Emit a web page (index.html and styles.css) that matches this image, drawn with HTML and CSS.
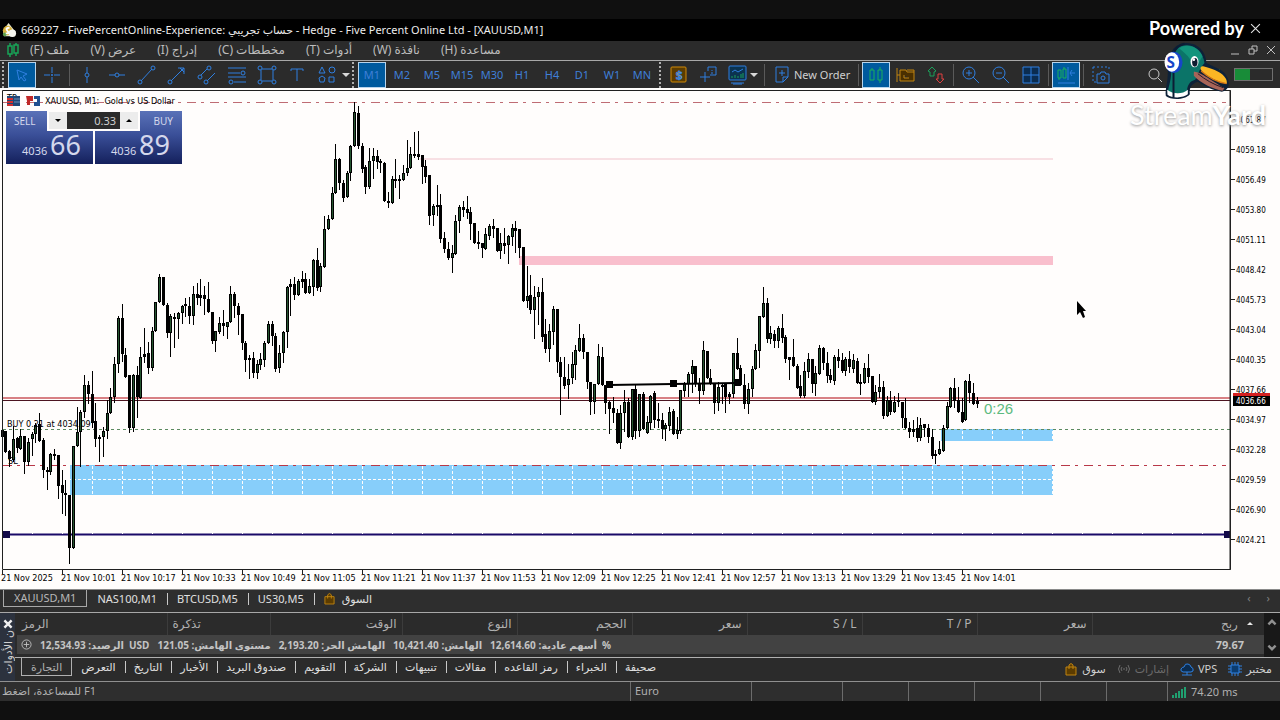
FILE: index.html
```html
<!DOCTYPE html>
<html lang="ar">
    <head>
        <meta charset="utf-8">
        <meta name="viewport" content="width=device-width, initial-scale=1">
        <title>XAUUSD,M1</title>

        <link rel="stylesheet" href="styles.css">
    </head>
    <body>
        <div class="titlebar">
            <svg class="applogo" viewBox="0 0 16 16"><path d="M7 0L14 9V14H2L1 8Z" fill="#e8e8d0"/><circle cx="6" cy="8" r="5" fill="#d8b23c"/><circle cx="11" cy="11" r="4" fill="#f4f4ee"/><circle cx="3" cy="12" r="2" fill="#5fa04c"/><path d="M8 5Q4 5 5 7T7 10T4 11" fill="none" stroke="#fff" stroke-width="2"/></svg>
            <span>669227 - FivePercentOnline-Experience: حساب تجريبي - Hedge - Five Percent Online Ltd - [XAUUSD,M1]</span>
        </div>

        <div class="menubar">
            <svg class="menulogo" viewBox="0 0 14 14"><path d="M4 0V3M4 11V14M10 0V2M10 10V13M2 3H6V11H2ZM8 2H12V10H8Z" fill="none" stroke="#18a558" stroke-width="1.5"/></svg>
            <button dir="rtl">ملف (F)</button>
            <button dir="rtl">عرض (V)</button>
            <button dir="rtl">إدراج (I)</button>
            <button dir="rtl">مخططات (C)</button>
            <button dir="rtl">أدوات (T)</button>
            <button dir="rtl">نافذة (W)</button>
            <button dir="rtl">مساعدة (H)</button>
            <div class="winbtns">
                <button aria-label="Minimize"><svg viewBox="0 0 10 10"><path d="M1 9H9"/></svg></button>
                <button aria-label="Restore"><svg viewBox="0 0 10 10"><path d="M1 4H6V9H1ZM4 4V1H9V6H6"/></svg></button>
                <button aria-label="Close"><svg viewBox="0 0 10 10"><path d="M1 1L9 9M9 1L1 9"/></svg></button>
            </div>
        </div>

        <div class="toolbar">
            <i class="grip"></i>
            <button class="tool active" aria-label="Cursor"><svg viewBox="0 0 20 20"><path d="M5 5L15 9L11 11L14 15L12 16L9 12L7 15Z"/></svg></button>
            <button class="tool" aria-label="Crosshair"><svg viewBox="0 0 20 20"><path d="M10 2V8M10 12V18M2 10H8M12 10H18M10 9V11M9 10H11"/></svg></button>
            <i class="sep"></i>
            <button class="tool" aria-label="Vertical line"><svg viewBox="0 0 20 20"><path d="M10 2V8M10 12V18"/><circle cx="10" cy="10" r="2"/></svg></button>
            <button class="tool" aria-label="Horizontal line"><svg viewBox="0 0 20 20"><path d="M2 10H8M12 10H18"/><circle cx="10" cy="10" r="2"/></svg></button>
            <button class="tool" aria-label="Trendline"><svg viewBox="0 0 20 20"><path d="M4 16L15 4"/><circle cx="3" cy="17" r="2"/><circle cx="16" cy="3" r="2"/></svg></button>
            <button class="tool" aria-label="Arrow"><svg viewBox="0 0 20 20"><path d="M4 16L17 3M11 3H17V9M13 3L17 7"/><circle cx="3" cy="17" r="2"/></svg></button>
            <button class="tool" aria-label="Channel"><svg viewBox="0 0 20 20"><path d="M4 10L10 4M10 16L18 8"/><circle cx="3" cy="12" r="2"/><circle cx="12" cy="3" r="2"/><circle cx="9" cy="17" r="2"/></svg></button>
            <button class="tool" aria-label="Fibonacci"><svg viewBox="0 0 20 20"><path d="M1 3H19M1 8H13M1 12H19M7 17H19"/><circle cx="16" cy="8" r="2"/><circle cx="4" cy="17" r="2"/></svg></button>
            <button class="tool" aria-label="Rectangle"><svg viewBox="0 0 20 20"><path d="M5 4H15M5 16H15M4 5V15M16 5V15"/><circle cx="3" cy="3" r="2"/><circle cx="17" cy="3" r="2"/><circle cx="3" cy="17" r="2"/><circle cx="17" cy="17" r="2"/></svg></button>
            <button class="tool" aria-label="Text"><svg viewBox="0 0 20 20"><path d="M4 6V4H16V6M10 4V16"/></svg></button>
            <button class="tool" aria-label="Objects"><svg viewBox="0 0 20 20"><path d="M5 2L8 8H2ZM5 11L8 13L7 17H3L2 13ZM12 12H17V17H12Z"/><circle cx="15" cy="5" r="3"/></svg></button>
            <i class="caret"></i>
            <i class="grip"></i>
            <button class="tool active">M1</button>
            <button class="tool">M2</button>
            <button class="tool">M5</button>
            <button class="tool">M15</button>
            <button class="tool">M30</button>
            <button class="tool">H1</button>
            <button class="tool">H4</button>
            <button class="tool">D1</button>
            <button class="tool">W1</button>
            <button class="tool">MN</button>
            <i class="grip"></i>
            <button class="tool" aria-label="Trading"><svg viewBox="0 0 20 20"><rect x="2" y="2" width="15" height="15" rx="1" fill="#5c3c00" stroke="#d08a08"/><text x="7" y="14" class="dollar">$</text></svg></button>
            <button class="tool" aria-label="Data window"><svg viewBox="0 0 20 20"><path d="M6 7V17M1 12H11M9 2H17V10H11M9 2V6M13 5V6M13 7V9"/></svg></button>
            <button class="tool narrow" aria-label="Indicators"><svg viewBox="0 0 20 20"><rect x="2" y="1" width="17" height="14" rx="1" fill="#0b3350"/><path d="M4 18H17M6 19H15M5 7L8 5L11 7L16 4"/><path d="M5 13V11M8 13V10M11 13V11M14 13V9M16 13V8" stroke="#1aa05a"/></svg></button>
            <i class="caret"></i>
            <i class="sep"></i>
            <button class="neworder"><svg viewBox="0 0 20 20"><path d="M4 2H16V12L11 17H4ZM16 12H11V17M7 8H13M10 5V11"/></svg>New Order</button>
            <i class="sep"></i>
            <button class="tool active" aria-label="Candlesticks"><svg viewBox="0 0 20 20"><path d="M4 5H8V15H4ZM12 5H16V15H12ZM6 3V5M14 2V5M14 15V18" stroke="#18b05c"/></svg></button>
            <button class="tool" aria-label="Templates"><svg viewBox="0 0 20 20"><path d="M4 5H10L11 7H18V16H4ZM1 3V17M1 10H4M11 5H18V7M8 10V13H13" fill="#4b3000" stroke="#c08410"/></svg></button>
            <button class="tool" aria-label="Depth of market"><svg viewBox="0 0 20 20"><path d="M6 2L10 6L8 7V11H4V7L2 6Z" stroke="#1aa05a"/><path d="M14 18L18 14H16V9H12V14H10Z" stroke="#e04040"/></svg></button>
            <i class="sep"></i>
            <button class="tool" aria-label="Zoom in"><svg viewBox="0 0 20 20"><circle cx="8" cy="8" r="6"/><path d="M12 12L18 18M5 8H11M8 5V11"/></svg></button>
            <button class="tool" aria-label="Zoom out"><svg viewBox="0 0 20 20"><circle cx="8" cy="8" r="6"/><path d="M12 12L18 18M5 8H11"/></svg></button>
            <button class="tool" aria-label="Tile windows"><svg viewBox="0 0 20 20"><path d="M2 2H18V18H2ZM10 2V18M2 10H18" fill="#0b2c50"/></svg></button>
            <i class="sep"></i>
            <button class="tool active" aria-label="Chart shift"><svg viewBox="0 0 20 20"><path d="M2 5H5V13H2ZM7 4H10V13H7ZM8 2V4M3 13V15" stroke="#18b05c"/><path d="M12 2V15M2 18H19M19 8H14M16 5L14 8L16 11"/></svg></button>
            <i class="sep"></i>
            <button class="tool" aria-label="Screenshot"><svg viewBox="0 0 20 20"><path d="M2 2H18V5M2 2V17H5" stroke-dasharray="2 2"/><path d="M6 9H9L10 7H14L15 9H18V18H6Z"/><circle cx="12" cy="13" r="2"/></svg></button>
            <button class="tool search" aria-label="Search"><svg viewBox="0 0 20 20"><circle cx="9" cy="9" r="5"/><path d="M13 13L17 17"/></svg></button>
            <button class="tool up" aria-label="Notifications"><svg viewBox="0 0 20 20"><path d="M10 4L14 8L12 9V13H8V9L6 8Z"/></svg></button>
            <span class="level"><b></b></span>
        </div>

        <div class="chart">
            <svg id="chart" class="plot" viewBox="0 88 1280 501">
                <rect class="blue" x="70" y="465" width="983" height="30"/>
                <rect class="blue" x="941" y="429" width="112" height="12"/>
                <path class="level-navy" d="M3 534.5H1230"/>
                <g id="grid"></g>
                <rect class="pink faint" x="420" y="158" width="633" height="2"/>
                <rect class="pink" x="519" y="256" width="534" height="9"/>
                <path class="stop faded" d="M3 102.5H1226"/>
                <path class="stop" d="M3 465.5H1226"/>
                <path class="entry" d="M3 429.5H1230"/>
                <path class="ask" d="M3 398H1230"/>
                <path class="bid" d="M3 400.5H1230"/>
                <g id="candles"></g>
                <path class="trend" d="M609 385L673 384L737 383"/>
                <path class="handles" d="M606 381h7v7h-7ZM670 380h7v7h-7ZM734 379h7v7h-7Z"/>
                <path class="handles navy" d="M3 531h7v7h-7ZM1224 531h7v7h-7Z"/>
                <text class="small" x="7" y="427">BUY 0.21 at 4034.09</text>
                <text class="small" x="8" y="464">SL</text>
                <text class="small" x="7" y="101">TP</text>
                <text class="timer" x="984" y="414">0:26</text>
                <path class="frame" d="M2.5 569.5V90.5H1230.5V569.5ZM1230 90V570"/>
                <g id="axes"></g>
                <rect x="1233" y="393" width="37" height="5" fill="#d42020"/>
                <rect x="1233" y="396" width="37" height="10"/>
                <text class="price now" x="1236" y="404">4036.66</text>
                <g>
                    <rect x="7" y="96" width="13" height="10" fill="#204878"/>
                    <path d="M7 99H13M7 102H13M7 105H13" stroke="#d03030" stroke-width="2"/>
                    <path d="M14 99H20M14 102H20" stroke="#7090b8"/>
                    <path d="M26 96H33V101H30V105H27V101Z" fill="#c02828"/>
                    <path d="M34 96H40V106H34V102H37V99H34Z" fill="#205090"/>
                </g>
                <text class="small" x="45" y="104">XAUUSD, M1:&#160; Gold vs US Dollar</text>
                <path d="M1077 301V315L1080 312L1083 318L1085 317L1083 311H1086Z"/>
            </svg>

            <div class="oneclick">
                <button class="deal"><span class="side">SELL</span><span class="quote">4036 <b>66</b></span></button>
                <button class="deal buy"><span class="side">BUY</span><span class="quote">4036 <b>89</b></span></button>
                <div class="volume">
                    <button aria-label="Less"><i class="down"></i></button>
                    <input type="text" value="0.33" aria-label="Volume">
                    <button aria-label="More"><i class="upward"></i></button>
                </div>
            </div>
        </div>

        <div class="charttabs">
            <button class="current">XAUUSD,M1</button>
            <button>NAS100,M1</button>
            <button>BTCUSD,M5</button>
            <button>US30,M5</button>
            <button class="market"><svg viewBox="0 0 12 14"><path d="M1 5H11V13H1ZM4 7V3Q6 0 8 3V7" fill="#5c3c00" stroke="#c08410"/></svg>السوق</button>
            <span class="arrows">‹</span>
            <span class="arrows">›</span>
        </div>

        <div class="toolbox">
            <div class="side-title">
                <button aria-label="Close toolbox"><svg viewBox="0 0 10 10"><path d="M2 2L8 8M8 2L2 8"/></svg></button>
                <span>ن الأدوات</span>
            </div>
            <div class="panel">
                <div class="trades">
                    <table>
                        <colgroup>
                            <col class="c-symbol"><col class="c-ticket"><col class="c-time"><col class="c-num"><col class="c-num"><col class="c-num"><col class="c-num"><col class="c-num"><col class="c-num"><col>
                        </colgroup>
                        <tr>
                            <th class="start">الرمز</th>
                            <th class="start">تذكرة</th>
                            <th>الوقت</th>
                            <th>النوع</th>
                            <th>الحجم</th>
                            <th>سعر</th>
                            <th>S / L</th>
                            <th>T / P</th>
                            <th>سعر</th>
                            <th class="profit">ربح <i class="upward"></i></th>
                        </tr>
                        <tr class="balance">
                            <td colspan="9">
                                <div class="sums">
                                    <svg viewBox="0 0 12 12"><circle cx="6" cy="6" r="5"/><path d="M3 6H9M6 3V9"/></svg>
                                    <span dir="rtl">الرصيد: 12,534.93</span>
                                    <span class="unit">USD</span>
                                    <span dir="rtl">مستوى الهامش: 121.05</span>
                                    <span dir="rtl">الهامش الحر: 2,193.20</span>
                                    <span dir="rtl">الهامش: 10,421.40</span>
                                    <span dir="rtl">أسهم عادية: 12,614.60</span>
                                    <span class="percent">%</span>
                                </div>
                            </td>
                            <td class="total">79.67</td>
                        </tr>
                    </table>
                    <div class="scroll">
                        <svg viewBox="0 0 10 10"><path d="M2 7L5 4L8 7"/></svg>
                        <svg viewBox="0 0 10 10"><path d="M2 3L5 6L8 3"/></svg>
                    </div>
                </div>
                <div class="tabs">
                    <button class="current">التجارة</button>
                    <button>التعرض</button>
                    <button>التاريخ</button>
                    <button>الأخبار</button>
                    <button>صندوق البريد</button>
                    <button>التقويم</button>
                    <button>الشركة</button>
                    <button>تنبيهات</button>
                    <button>مقالات</button>
                    <button>رمز القاعده</button>
                    <button>الخبراء</button>
                    <button>صحيفة</button>
                    <div class="services">
                        <a href="#market"><svg viewBox="0 0 14 14"><path d="M2 5H12V13H2ZM5 7V3Q7 0 9 3V7" fill="#5c3c00" stroke="#c08410"/></svg>سوق</a>
                        <a href="#signals" class="off"><svg viewBox="0 0 14 14"><path d="M3 3Q0 7 3 11M11 3Q14 7 11 11M5 5Q3 7 5 9M9 5Q11 7 9 9M7 6V8"/></svg>إشارات</a>
                        <a href="#vps"><svg viewBox="0 0 14 14"><path d="M3 10Q0 9 1 7Q2 5 4 5Q5 1 8 2Q11 3 11 5Q14 6 13 9L11 10ZM7 10V13M2 13H12" fill="#0b2c50" stroke="#2f80e0"/></svg>VPS</a>
                        <a href="#tester"><svg viewBox="0 0 14 14"><path d="M3 3H11V11H3Z" fill="#0b3c70" stroke="#2f80e0"/><path d="M4 0V3M7 0V3M10 0V3M4 11V14M7 11V14M10 11V14M0 4H3M0 7H3M0 10H3M11 4H14M11 7H14M11 10H14" stroke="#2f80e0"/></svg>مختبر</a>
                    </div>
                </div>
            </div>
        </div>

        <div class="status">
            <span class="help" dir="rtl">F1 للمساعدة، اضغط</span>
            <span class="profile">Euro</span>
            <span class="cell"></span>
            <span class="cell"></span>
            <span class="cell"></span>
            <span class="cell"></span>
            <span class="cell"></span>
            <span class="cell"></span>
            <span class="ping"><svg viewBox="0 0 14 12"><path d="M1 12V9M4 12V7M7 12V5M10 12V3M13 12V1"/></svg>74.20 ms</span>
        </div>

        <div class="watermark">
            <span class="powered">Powered by</span>
            <svg class="close" viewBox="0 0 10 10"><path d="M1 1L9 9M9 1L1 9"/></svg>
            <svg class="duck" viewBox="0 0 200 180">
                <path d="M8 165C5 145 14 125 14 95C10 50 25 8 68 6C105 5 128 32 130 66L172 86C186 94 196 112 196 122C200 135 190 150 176 152C150 148 124 135 104 122C84 128 78 140 80 160C66 178 22 178 8 165Z" fill="#0e2138"/>
                <path d="M14 158C14 140 24 122 24 94C18 50 34 14 68 13C100 13 120 36 124 66C110 80 104 104 96 116C80 120 70 134 72 156Z" fill="#0b7468"/>
                <path d="M48 22C70 6 106 16 118 46L104 70L82 56C70 40 62 34 48 22Z" fill="#12947c"/>
                <path d="M12 146C30 160 58 160 74 146L74 160C60 172 26 172 13 161Z" fill="#fff"/>
                <path d="M92 92C108 92 124 104 184 142L178 149C150 144 112 126 92 104Z" fill="#a86458"/>
                <path d="M120 76C134 80 150 84 168 94C184 104 193 116 191 128C170 126 132 108 114 88C110 82 112 76 120 76Z" fill="#fbb624"/>
                <path d="M114 90C136 110 164 124 190 128" fill="none" stroke="#d87818" stroke-width="4"/>
                <path d="M104 98C126 116 150 130 180 140" fill="none" stroke="#2a1c28" stroke-width="3"/>
                <ellipse cx="94" cy="62" rx="12" ry="17" fill="#fff"/>
                <ellipse cx="95" cy="64" rx="8" ry="13" fill="#0e1c30"/>
                <circle cx="92" cy="56" r="4" fill="#fff"/>
                <path d="M31 90V170M30 42C34 24 50 10 64 8" fill="none" stroke="#0c1c34" stroke-width="6"/>
                <ellipse cx="32" cy="64" rx="26" ry="32" fill="#1746c8"/>
                <ellipse cx="26" cy="63" rx="22" ry="29" fill="#fff"/>
                <text x="10" y="80" class="duck-s">S</text>
            </svg>
            <span class="brand">Stream<b>Yard</b></span>
        </div>

        <script src="script.js"></script>
    </body>
</html>
```
FILE: styles.css
```css
* {
    box-sizing: border-box;
}

body {
    font-family: "Noto Sans", "Open Sans", "DejaVu Sans", sans-serif;
    font-size: 11px;
    line-height: 16px;
    margin: 0px;
    padding: 19px 0px;
    position: relative;
    color: #d0d0d0;
    background-color: #101010;
    overflow-x: hidden;
}

button,
input {
    font: inherit;
    color: inherit;
    background: none;
    border: 0px;
    border-radius: 0px;
    padding: 0px;
    margin: 0px;
}

svg {
    flex: none;
    fill: none;
    stroke: none;
}

.titlebar {
    display: flex;
    align-items: center;
    gap: 4px;
    height: 22px;
    padding-left: 2px;
    color: #ececec;
    background-color: #000;
    white-space: nowrap;
}

.applogo {
    width: 15px;
    height: 15px;
}

.menubar {
    display: flex;
    align-items: center;
    gap: 21px;
    height: 19px;
    padding: 0px 4px 2px 6px;
    background-color: #2b2b2b;
    white-space: nowrap;
    color: #bcbcbc;
}

.menubar > button {
    font-size: 12px;
}

.menulogo {
    width: 14px;
    height: 14px;
    margin-right: -11px;
}

.winbtns {
    display: flex;
    gap: 8px;
    margin-left: auto;
}

.winbtns svg {
    display: block;
    width: 10px;
    height: 10px;
    stroke: #c0c0c0;
}

/* toolbar */

.toolbar {
    display: flex;
    align-items: center;
    height: 28px;
    padding-right: 7px;
    border-top: 1px solid #a8a8a8;
    background-color: #2b2b2b;
}

.tool {
    flex: none;
    display: flex;
    align-items: center;
    justify-content: center;
    width: 30px;
    height: 26px;
    color: #3f7fd8;
}

.tool svg,
.neworder svg {
    width: 20px;
    height: 20px;
    stroke: #2f7fe0;
}

.tool.narrow {
    width: 26px;
}

.tool.active {
    background-color: #005a9e;
    border: 1px solid #b8d4ec;
    width: 28px;
    margin: 0px 1px;
}

.grip {
    flex: none;
    width: 2px;
    height: 26px;
    margin: 0px 3px 0px 2px;
    border-left: 2px dotted #b0b0b0;
}

.sep {
    flex: none;
    width: 1px;
    height: 22px;
    margin: 0px 2px;
    background-color: #5a5a5a;
}

.caret {
    flex: none;
    border: 4px solid transparent;
    border-top-color: #d8d8d8;
    border-bottom-width: 0px;
}

.caret + .sep {
    margin-left: 6px;
}

.dollar {
    font-size: 11px;
    font-weight: bold;
    fill: #e8a020;
}

.neworder {
    flex: none;
    display: flex;
    align-items: center;
    gap: 2px;
    padding: 0px 6px 0px 5px;
    white-space: nowrap;
}

.search {
    margin-left: auto;
}

.search svg {
    stroke: #c8c8c8;
}

.up {
    margin-left: 34px;
}

.up svg {
    stroke: #1aa05a;
}

.level {
    flex: none;
    width: 39px;
    height: 13px;
    border: 1px solid #707070;
}

.level b {
    display: block;
    width: 15px;
    height: 11px;
    background-color: #188c38;
}

/* chart */

.chart {
    position: relative;
    background-color: #fffdfc;
}

.plot {
    display: block;
    width: 100%;
    height: auto;
    fill: #000;
}

.pink {
    fill: #f9bfcd;
}

.pink.faint {
    fill: #f8e0e4;
}

.blue {
    fill: #87cefa;
}

.grid-line {
    stroke: #fffdfc;
    stroke-dasharray: 3 2;
}

.level-navy {
    stroke: #1a0a68;
    stroke-width: 2;
}

.stop {
    fill: none;
    stroke: #b83848;
    stroke-dasharray: 9 5 3 6;
}

.stop.faded {
    stroke: #bf6c74;
}

.entry {
    fill: none;
    stroke: #5c8a60;
    stroke-dasharray: 3 3;
}

.ask {
    fill: none;
    stroke: #d88084;
    stroke-width: 2;
}

.bid {
    fill: none;
    stroke: #4c1420;
}

.candle {
    fill: #000;
    shape-rendering: crispEdges;
}

.rise {
    fill: #24552f;
    shape-rendering: crispEdges;
}

.trend {
    fill: none;
    stroke: #000;
    stroke-width: 2;
}

.handles.navy {
    fill: #120a48;
}

.frame,
.tick {
    fill: none;
    stroke: #202020;
}

.small,
.price {
    font-family: "DejaVu Sans Condensed", "DejaVu Sans", sans-serif;
    font-size: 9px;
}

.price {
    font-size: 8px;
}

.now {
    fill: #fff;
}

.timer {
    font-family: "Liberation Sans", sans-serif;
    font-size: 15px;
    fill: #5cba80;
}

.oneclick {
    position: absolute;
    left: 6px;
    top: 23px;
    display: flex;
    gap: 2px;
}

.deal {
    display: flex;
    flex-direction: column;
    justify-content: space-between;
    width: 87px;
    height: 53px;
    padding: 0px 4px 0px 8px;
    color: #d4d8ec;
    background: linear-gradient(#5a72b8, #3a4f98 45%, #14205c);
    text-align: left;
}

.deal.buy .side {
    text-align: right;
}

.side {
    width: 100%;
    padding: 2px 5px 0px 0px;
    font-size: 10px;
}

.quote {
    width: 100%;
    padding-right: 8px;
    text-align: right;
    line-height: 26px;
    white-space: nowrap;
}

.quote b {
    font-size: 27px;
    font-weight: 400;
}

.volume {
    position: absolute;
    left: 41px;
    top: 0px;
    display: flex;
    width: 93px;
    height: 20px;
    padding: 1px 2px 2px;
    background-color: #fffdfc;
}

.volume button {
    width: 18px;
    display: flex;
    align-items: center;
    justify-content: center;
    background-color: #ececec;
    color: #000;
}

.volume input {
    flex: 1;
    min-width: 0px;
    padding-right: 4px;
    text-align: right;
    background-color: #2b2b2b;
}

.down,
.upward {
    display: inline-block;
    border: 3px solid transparent;
}

.down {
    border-top-color: currentColor;
    border-bottom-width: 0px;
}

.upward {
    border-bottom-color: currentColor;
    border-top-width: 0px;
}

/* chart tabs */

.charttabs {
    display: flex;
    align-items: flex-start;
    height: 24px;
    padding: 0px 10px 0px 3px;
    border-top: 1px solid #8a8a8a;
    border-bottom: 1px solid #a8a8a8;
    background-color: #2e2e2e;
    color: #e0e0e0;
}

.charttabs button {
    height: 17px;
    padding: 0px 10px;
    white-space: nowrap;
    position: relative;
}

.charttabs button + button::before,
.tabs button + button::before {
    content: "";
    position: absolute;
    left: 0px;
    top: 3px;
    height: 12px;
    border-left: 1px solid #c8c8c8;
}

.charttabs .current + button::before,
.tabs .current + button::before {
    display: none;
}

.charttabs .current {
    border: 1px solid #a8a8a8;
    border-top: 0px;
    color: #b8b8b8;
}

.charttabs .market {
    display: flex;
    align-items: center;
    gap: 7px;
    margin-right: auto;
}

.market svg {
    width: 11px;
    height: 13px;
}

.arrows {
    margin-left: 16px;
    color: #808080;
}

/* toolbox */

.toolbox {
    display: flex;
    background-color: #2b2b2b;
}

.side-title {
    flex: none;
    display: flex;
    flex-direction: column;
    align-items: center;
    width: 15px;
    height: 68px;
    padding-top: 5px;
    background-color: #2c323e;
    overflow: hidden;
}

.side-title svg {
    display: block;
    width: 12px;
    height: 12px;
    stroke: #f0f0f0;
    stroke-width: 2;
}

.side-title span {
    writing-mode: vertical-rl;
    transform: rotate(180deg);
    white-space: nowrap;
}

.panel {
    flex: 1;
    min-width: 0px;
}

.trades {
    display: flex;
    height: 44px;
}

table {
    flex: 1;
    align-self: flex-start;
    min-width: 0px;
    table-layout: fixed;
    border-collapse: collapse;
    margin-left: 2px;
}

.c-symbol {
    width: 150px;
}

.c-ticket {
    width: 103px;
}

.c-time {
    width: 132px;
}

.c-num {
    width: 115px;
}

th {
    height: 22px;
    padding: 0px 5px;
    border-right: 1px solid #3c3c3c;
    font-size: 12px;
    font-weight: normal;
    text-align: right;
    color: #b0b0b0;
}

th.start {
    text-align: left;
}

th.profit {
    padding-right: 11px;
    border-right: 0px;
}

.profit .upward {
    margin: 0px 0px 3px 6px;
    color: #e8e8e8;
}

.balance {
    background-color: #424242;
    color: #c4c4c4;
}

.balance td {
    height: 19px;
    padding: 0px 4px;
    font-weight: bold;
    white-space: nowrap;
}

.balance .total {
    padding-right: 20px;
    text-align: right;
}

.sums {
    display: flex;
    align-items: center;
    gap: 8px;
    font-size: 10px;
}

.sums svg {
    width: 11px;
    height: 11px;
    stroke: #c0c0c0;
}

.sums .unit,
.sums .percent {
    margin-left: -3px;
}

.scroll {
    display: flex;
    flex-direction: column;
    justify-content: space-between;
    align-items: center;
    width: 16px;
    padding: 3px 0px;
    background-color: #181818;
}

.scroll svg {
    width: 12px;
    height: 12px;
    stroke: #909090;
    stroke-width: 2;
}

.tabs {
    display: flex;
    align-items: flex-start;
    height: 24px;
    padding-left: 6px;
    border-top: 1px solid #b0b0b0;
    color: #e0e0e0;
}

.tabs button {
    height: 18px;
    padding: 0px 9px;
    position: relative;
    white-space: nowrap;
}

.tabs .current {
    border: 1px solid #b0b0b0;
    border-top: 0px;
    color: #b0b0b0;
}

.services {
    display: flex;
    gap: 11px;
    margin-left: auto;
    padding: 3px 8px 0px 0px;
}

.services a {
    display: flex;
    align-items: center;
    gap: 4px;
    color: #d0d0d0;
    text-decoration: none;
}

.services svg {
    width: 14px;
    height: 14px;
}

.services .off {
    color: #6c6c6c;
}

.off svg {
    stroke: #6c6c6c;
}

.status {
    display: flex;
    height: 20px;
    border-top: 1px solid #909090;
    background-color: #2e2e2e;
    color: #b0b0b0;
    line-height: 18px;
}

.status span + span {
    border-left: 1px solid #6c6c6c;
    padding-left: 4px;
}

.help {
    flex: 1;
    padding: 0px 2px;
    text-align: left;
}

.profile {
    width: 121px;
}

.cell {
    width: 66px;
}

.profile + .cell {
    width: 91px;
}

.cell:nth-last-child(2) {
    width: 61px;
}

.ping {
    display: flex;
    align-items: center;
    gap: 5px;
    width: 113px;
}

.ping svg {
    width: 14px;
    height: 12px;
    stroke: #20a070;
    stroke-width: 2;
}

/* stream overlay */

.watermark {
    position: absolute;
    right: 14px;
    top: 17px;
    width: 140px;
    display: grid;
    grid-template-columns: 1fr 16px;
    align-items: center;
}

.powered {
    padding-right: 6px;
    text-align: right;
    color: #fff;
    font-family: Lato, sans-serif;
    font-size: 18px;
    font-weight: bold;
    line-height: 23px;
    white-space: nowrap;
}

.close {
    width: 11px;
    height: 11px;
    stroke: #e0e0e0;
}

.duck {
    grid-column: 1 / 3;
    width: 67px;
    height: 60px;
    margin: 1px 0px 0px 37px;
}

.duck-s {
    font-size: 46px;
    font-weight: bold;
    fill: #1746c8;
}

.brand {
    grid-column: 1 / 3;
    justify-self: end;
    color: #fff;
    font-family: Lato, sans-serif;
    font-size: 27px;
    line-height: 28px;
    text-shadow: 0px 1px 3px #909090;
    white-space: nowrap;
}
```
FILE: script.js
```javascript
// high, body top, body bottom, low, 1 = rising
var candles = [
    [430,430,437,437,0],[431,431,452,452,0],[450,451,459,466,0],[426,439,460,461,1],[437,438,448,452,0],[429,436,449,449,1],
    [436,436,462,473,0],[438,442,462,465,1],[432,434,439,455,1],[423,425,434,442,1],[413,424,441,441,0],[438,440,470,477,0],
    [467,470,472,489,0],[453,454,472,474,1],[449,454,456,459,0],[455,455,486,498,0],[470,485,493,513,0],[480,493,495,515,0],
    [495,495,548,563,0],[446,446,548,548,1],[407,432,446,446,1],[410,412,432,466,1],[375,385,412,417,1],[381,385,394,403,0],
    [371,394,423,427,0],[403,421,439,446,0],[435,437,439,461,0],[427,431,437,456,1],[400,413,431,438,1],[388,397,413,413,1],
    [357,364,397,402,1],[316,318,364,372,1],[304,318,354,361,0],[348,355,377,377,0],[375,375,428,432,0],[374,375,428,431,1],
    [366,375,397,417,0],[347,357,398,398,1],[328,354,357,362,1],[342,353,368,373,0],[327,331,368,370,1],[302,302,331,331,1],
    [274,277,302,302,1],[277,277,305,305,0],[303,305,333,337,0],[314,316,333,356,1],[313,317,319,347,0],[312,313,319,338,1],
    [305,306,313,323,1],[298,304,306,316,0],[297,306,316,323,0],[286,294,316,324,1],[283,294,298,304,0],[279,295,298,305,1],
    [286,295,299,314,0],[282,299,312,312,0],[312,312,341,343,0],[331,331,341,351,1],[317,323,332,333,1],[310,323,326,335,0],
    [322,322,327,338,1],[286,294,322,322,1],[292,294,306,317,0],[303,306,315,334,0],[314,314,343,349,0],[341,343,360,371,0],
    [355,358,360,378,0],[352,358,373,377,0],[360,364,373,378,1],[353,359,365,369,1],[341,343,360,366,1],[321,324,343,343,1],
    [321,324,336,345,0],[333,336,369,371,0],[345,353,368,372,1],[331,332,353,362,1],[286,287,332,347,1],[279,284,287,315,1],
    [277,284,295,299,0],[279,281,295,295,1],[271,279,282,287,1],[273,279,293,293,0],[279,286,293,293,1],[259,260,287,295,1],
    [248,260,288,290,0],[263,266,287,291,1],[216,229,267,267,1],[215,219,229,229,1],[187,193,219,219,1],[144,159,193,193,1],
    [158,159,183,189,0],[180,183,198,201,0],[171,173,197,197,1],[145,146,173,180,1],[102,112,146,146,1],[106,113,146,148,0],
    [143,146,169,172,0],[165,167,187,193,0],[148,161,187,188,1],[148,156,161,178,1],[150,156,162,168,0],[159,161,163,172,0],
    [162,163,201,201,0],[192,201,202,207,0],[176,179,203,203,1],[159,179,181,187,0],[175,179,181,198,0],[165,173,180,180,1],
    [140,168,173,175,1],[147,154,168,168,1],[132,154,155,157,0],[131,154,157,159,0],[155,155,167,183,0],[160,166,177,182,0],
    [175,175,216,224,0],[204,206,215,225,1],[185,205,207,215,0],[194,205,239,242,0],[232,238,249,252,0],[242,249,258,259,0],
    [245,253,258,272,1],[215,221,254,254,1],[205,207,221,232,1],[201,207,210,216,0],[196,209,213,218,0],[207,212,224,239,0],
    [223,223,243,243,0],[231,242,244,248,0],[243,243,248,257,0],[228,234,249,249,1],[224,226,236,239,1],[219,226,229,237,0],
    [228,228,251,251,0],[233,243,251,258,1],[228,243,246,253,0],[235,236,245,263,1],[224,228,237,245,1],[221,228,231,252,0],
    [229,229,248,257,0],[247,247,301,301,0],[266,296,301,307,1],[275,295,310,313,0],[286,297,310,338,1],[287,292,297,324,1],
    [278,292,337,341,0],[319,334,349,352,0],[324,331,349,361,1],[306,309,332,344,1],[309,309,362,372,0],[357,362,377,414,0],
    [357,377,386,388,0],[364,379,385,398,1],[352,364,378,383,1],[345,350,365,379,1],[324,338,351,351,1],[334,338,352,358,0],
    [352,352,382,388,0],[382,382,402,414,0],[384,384,402,413,1],[344,356,384,384,1],[347,357,385,385,0],[385,385,403,413,0],
    [401,402,409,433,0],[397,408,413,422,0],[409,413,443,443,0],[405,413,443,448,1],[390,402,413,431,1],[398,402,437,437,0],
    [389,389,437,439,1],[385,389,431,438,0],[394,394,431,436,1],[392,394,429,429,0],[416,422,433,433,1],[395,396,423,429,1],
    [391,393,420,427,0],[403,419,421,427,0],[413,420,429,438,0],[423,425,429,440,1],[407,412,426,430,1],[409,411,434,434,0],
    [417,430,434,438,1],[390,390,431,433,1],[382,384,391,396,1],[372,374,384,396,1],[360,366,374,392,1],[366,366,383,386,0],
    [378,383,391,403,0],[341,350,391,394,1],[351,351,378,378,0],[369,378,384,384,0],[384,384,403,413,0],[382,387,403,410,1],
    [383,385,387,403,0],[384,384,397,412,0],[392,394,397,403,1],[353,353,394,397,1],[338,353,369,369,0],[365,368,385,385,0],
    [374,385,404,408,0],[383,389,404,413,1],[366,369,389,396,1],[344,350,369,369,1],[316,316,351,367,1],[287,303,317,317,1],
    [298,303,339,342,0],[326,333,339,343,1],[330,334,341,347,0],[326,328,341,347,1],[314,328,338,342,0],[335,337,359,362,0],
    [357,357,360,379,0],[339,357,366,366,0],[364,366,388,388,0],[375,386,396,397,0],[362,371,396,397,1],[353,359,372,377,1],
    [359,359,384,392,0],[366,373,384,395,1],[345,348,374,374,1],[347,348,363,369,0],[352,363,376,382,0],[369,375,380,382,0],
    [355,357,381,384,1],[349,357,361,367,0],[353,360,371,372,0],[357,359,371,375,1],[351,359,367,372,0],[354,360,369,372,1],
    [358,361,383,383,0],[374,382,383,394,0],[363,368,383,383,1],[354,368,377,382,0],[376,376,402,402,0],[385,392,402,404,1],
    [374,387,392,397,1],[381,387,416,418,0],[396,400,416,416,1],[391,400,412,414,0],[396,402,412,412,1],[393,400,402,406,0],
    [402,402,418,427,0],[398,418,428,428,0],[422,428,432,437,0],[420,429,432,436,0],[417,428,438,441,0],[418,425,438,440,1],
    [424,424,428,436,0],[424,428,437,442,0],[429,437,456,458,0],[450,454,456,463,0],[441,449,454,454,1],[425,428,451,451,1],
    [402,406,428,428,1],[387,388,407,407,1],[378,388,401,407,0],[387,400,412,412,0],[398,412,422,422,0],[380,381,420,420,1],
    [374,381,393,402,0],[383,393,404,404,0],[397,401,404,407,0]
];

var times = ['2025', '10:01', '10:17', '10:33', '10:49', '11:05', '11:21', '11:37', '11:53',
    '12:09', '12:25', '12:41', '12:57', '13:13', '13:29', '13:45', '14:01'];

function add(parent, name, attrs, text) {
    var el = document.createElementNS('http://www.w3.org/2000/svg', name);
    for (var key in attrs) {
        el.setAttribute(key, attrs[key]);
    }
    if (text) {
        el.textContent = text;
    }
    document.getElementById(parent).appendChild(el);
}

function bar(cls, x, y, width, height) {
    add('candles', 'rect', { 'class': cls, x: x, y: y, width: width, height: height });
}

candles.forEach(function (c, i) {
    var x = Math.floor(2.2 + i * 3.75);
    bar('candle', x, c[0], 1, c[3] - c[0] + 1);
    bar('candle', x - 1, c[1], 3, Math.max(c[2] - c[1], 2));
    if (c[4] && c[2] - c[1] > 3) {
        bar('rise', x, c[1] + 1, 1, c[2] - c[1] - 2);
    }
});

for (var gx = 32; gx < 1230; gx += 30) {
    add('grid', 'path', { 'class': 'grid-line', d: 'M' + (gx + 0.5) + ' 91V569' });
}

// price scale goes down 2.69 per step
for (var n = 0; n < 15; n++) {
    var gy = 119.5 + n * 30;
    add('grid', 'path', { 'class': 'grid-line', d: 'M3 ' + gy + 'H1230' });
    add('axes', 'path', { 'class': 'tick', d: 'M1231 ' + gy + 'h4' });
    add('axes', 'text', { 'class': 'price', x: 1236, y: gy + 3 }, (4061.87 - n * 2.69).toFixed(2));
}

times.forEach(function (t, i) {
    add('axes', 'path', { 'class': 'tick', d: 'M' + (2.5 + i * 60) + ' 570v4' });
    add('axes', 'text', { 'class': 'small', x: 1 + i * 60, y: 581 }, '21 Nov ' + t);
});
```
